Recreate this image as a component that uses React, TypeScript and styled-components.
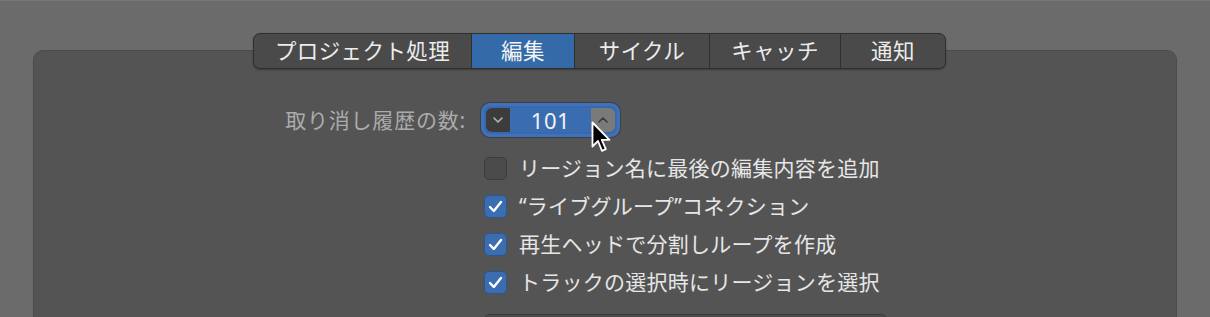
import React from 'react'
import styled, { createGlobalStyle } from 'styled-components'

const GlobalStyle = createGlobalStyle`
  html, body {
    margin: 0;
    padding: 0;
    background: #6b6b6b;
  }
  body {
    font-family: "Noto Sans", "Noto Sans CJK JP", sans-serif;
    overflow: hidden;
  }
`

const Window = styled.div`
  height: 317px;
  box-sizing: border-box;
  padding: 33px 33px 0;
  overflow: hidden;
  box-shadow: inset 0 1px 0 #767676;
`

const TabBar = styled.div`
  position: relative;
  z-index: 1;
  display: flex;
  width: max-content;
  height: 36px;
  margin-left: 220px;
  box-sizing: border-box;
  border: 1px solid #2f2f2f;
  border-radius: 7px;
  background: #4a4a4a;
  overflow: hidden;
  box-shadow: 0 1px 2px rgba(0, 0, 0, 0.3);
`

const Tab = styled.div<{ $w: number; $active?: boolean }>`
  width: ${p => p.$w}px;
  box-sizing: border-box;
  display: flex;
  align-items: center;
  justify-content: center;
  font-size: 21.5px;
  line-height: 1;
  letter-spacing: 0.4px;
  color: ${p => (p.$active ? '#f4f4f4' : '#ececec')};
  background: ${p => (p.$active ? '#356aa9' : 'transparent')};
  & + & {
    border-left: 1px solid #2f2f2f;
  }
`

const Panel = styled.div`
  margin-top: -19px;
  height: 300px;
  box-sizing: border-box;
  padding-top: 51px;
  background: #545454;
  border: 1px solid #4b4b4b;
  border-radius: 10px;
`

const Form = styled.div`
  display: grid;
  grid-template-columns: 432px auto;
  column-gap: 14px;
  align-items: center;
`

const Label = styled.div`
  text-align: right;
  font-size: 21px;
  line-height: 1;
  color: #ababab;
  letter-spacing: 0.8px;
`

const StepperWrap = styled.div`
  position: relative;
  width: max-content;
`

const Shell = styled.div`
  padding: 1px;
  border-radius: 10px;
  background: #3e3e3e;
`

const Ring = styled.div`
  display: flex;
  padding: 2px;
  border: 3px solid #3f71bd;
  border-radius: 9px;
  background: #3969ac;
`

const StepButton = styled.div<{ $up?: boolean }>`
  width: 24px;
  height: 24px;
  display: flex;
  align-items: center;
  justify-content: center;
  background: ${p => (p.$up ? '#7a7a7a' : '#3c3c3c')};
  border-radius: ${p => (p.$up ? '0 6px 6px 0' : '6px 0 0 6px')};
`

const Value = styled.div`
  width: 81px;
  height: 24px;
  display: flex;
  align-items: center;
  justify-content: center;
  background: #3a6db0;
  color: #f2f2f2;
  font-size: 22px;
  line-height: 1;
  letter-spacing: 0.5px;
`

const Cursor = styled.svg`
  position: absolute;
  left: 111px;
  top: 19px;
  pointer-events: none;
`

const Options = styled.div`
  grid-column: 2;
  margin-top: 11px;
  display: flex;
  flex-direction: column;
`

const Option = styled.div`
  height: 38px;
  display: flex;
  align-items: center;
  gap: 12px;
  padding-left: 4px;
  font-size: 21px;
  line-height: 1;
  letter-spacing: 0.25px;
  color: #e6e6e6;
`

const Box = styled.div<{ $checked?: boolean }>`
  width: 23px;
  height: 23px;
  box-sizing: border-box;
  border-radius: 5px;
  display: flex;
  align-items: center;
  justify-content: center;
  background: ${p => (p.$checked ? '#3b6db1' : '#4b4b4b')};
  border: 1px solid ${p => (p.$checked ? '#2d5691' : '#3c3c3c')};
`

const Popup = styled.div`
  grid-column: 2;
  margin: 13px 0 0 3px;
  width: 405px;
  height: 30px;
  box-sizing: border-box;
  border: 1px solid #3a3a3a;
  border-radius: 7px;
  background: #4b4b4b;
`

const tabs = [
  { label: 'プロジェクト処理', w: 217 },
  { label: '編集', w: 103, active: true },
  { label: 'サイクル', w: 135 },
  { label: 'キャッチ', w: 131 },
  { label: '通知', w: 105 },
]

const options = [
  { label: 'リージョン名に最後の編集内容を追加', checked: false },
  { label: '“ライブグループ”コネクション', checked: true },
  { label: '再生ヘッドで分割しループを作成', checked: true },
  { label: 'トラックの選択時にリージョンを選択', checked: true },
]

const Chevron = ({ up, color }: { up?: boolean; color: string }) => (
  <svg width="10" height="6" viewBox="0 0 10 6">
    <path
      d={up ? 'M1 5 L5 1 L9 5' : 'M1 1 L5 5 L9 1'}
      fill="none"
      stroke={color}
      strokeWidth="1.6"
      strokeLinecap="round"
      strokeLinejoin="round"
    />
  </svg>
)

const Check = () => (
  <svg width="15" height="13" viewBox="0 0 15 13">
    <path
      d="M2 7 L5.8 11 L13 2"
      fill="none"
      stroke="#ffffff"
      strokeWidth="2.4"
      strokeLinecap="round"
      strokeLinejoin="round"
    />
  </svg>
)

export default function App() {
  return (
    <>
      <GlobalStyle />
      <Window>
        <TabBar>
          {tabs.map(t => (
            <Tab key={t.label} $w={t.w} $active={t.active}>
              {t.label}
            </Tab>
          ))}
        </TabBar>
        <Panel>
          <Form>
            <Label>取り消し履歴の数:</Label>
            <StepperWrap>
              <Shell>
                <Ring>
                  <StepButton>
                    <Chevron color="#b4b4b4" />
                  </StepButton>
                  <Value>101</Value>
                  <StepButton $up>
                    <Chevron up color="#3a3a3a" />
                  </StepButton>
                </Ring>
              </Shell>
              <Cursor width="22" height="33" viewBox="0 0 22 33">
                <path
                  d="M1.5 1.5 L1.5 25.5 L7 20 L11 29.8 L14.8 28.2 L10.8 18.8 L18.5 18.8 Z"
                  fill="#000"
                  stroke="#fff"
                  strokeWidth="1.8"
                  strokeLinejoin="round"
                />
              </Cursor>
            </StepperWrap>
            <Options>
              {options.map(o => (
                <Option key={o.label}>
                  <Box $checked={o.checked}>{o.checked && <Check />}</Box>
                  {o.label}
                </Option>
              ))}
            </Options>
            <Popup />
          </Form>
        </Panel>
      </Window>
    </>
  )
}
